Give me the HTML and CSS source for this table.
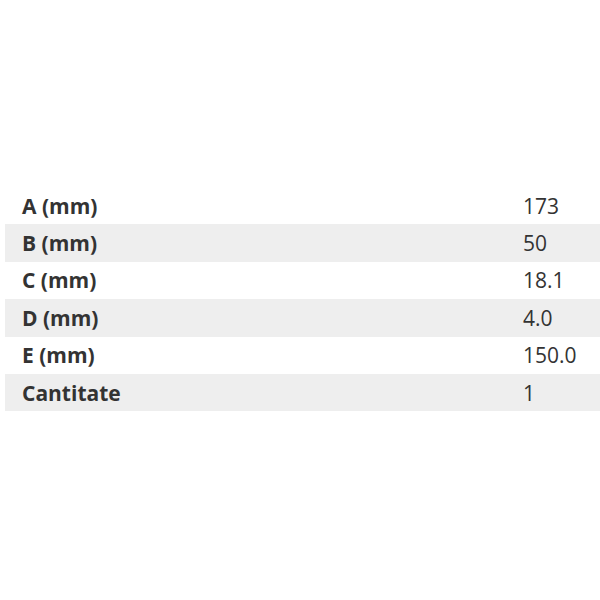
FILE: index.html
```html
<!DOCTYPE html>
<html>
<head>
<meta charset="utf-8">
<link rel="stylesheet" href="styles.css">
</head>
<body>
<div class="page">
<table class="specs">
<tbody>
<tr><th>A (mm)</th><td>173</td></tr>
<tr class="alt"><th>B (mm)</th><td>50</td></tr>
<tr><th>C (mm)</th><td>18.1</td></tr>
<tr class="alt"><th>D (mm)</th><td>4.0</td></tr>
<tr><th>E (mm)</th><td>150.0</td></tr>
<tr class="alt"><th>Cantitate</th><td>1</td></tr>
</tbody>
</table>
</div>
</body>
</html>
```
FILE: styles.css
```css
html, body {
  margin: 0;
  padding: 0;
  background: #fff;
}
.page {
  padding: 187px 0 0 5px;
}
.specs {
  width: 595px;
  border-collapse: collapse;
  font-family: "Open Sans", sans-serif;
  font-size: 21px;
  color: #333;
}
.specs th, .specs td {
  height: 37.4px;
  padding: 0 0 0 17px;
  text-align: left;
  vertical-align: middle;
  box-sizing: border-box;
}
.specs th {
  font-weight: 700;
  width: 501px;
}
.specs td {
  font-weight: 400;
}
.specs .alt {
  background: #eeeeee;
}
```
